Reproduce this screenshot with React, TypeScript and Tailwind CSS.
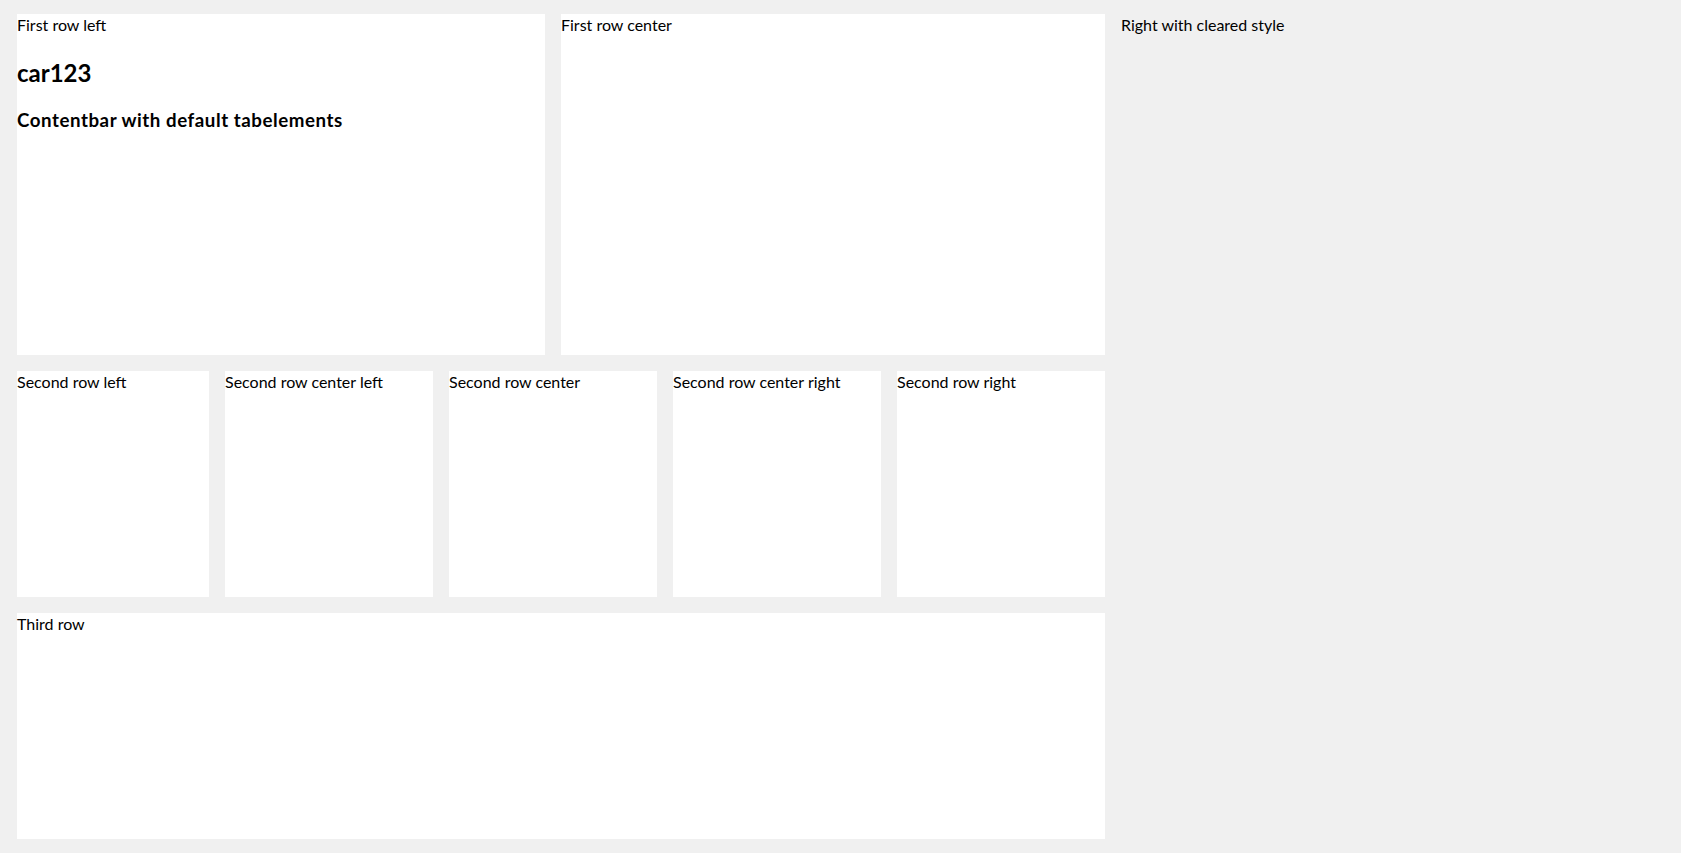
export default function App() {
  const font = "font-['Lato','Liberation_Sans',sans-serif]";
  return (
    <div className={`h-screen w-full bg-[#f0f0f0] flex gap-4 pl-[17px] py-[14px] text-black text-[16px] leading-[21px] ${font}`}>
      <div className="w-[1088px] flex flex-col gap-4 shrink-0">
        <div className="h-[341px] flex gap-4">
          <div className="w-[528px] bg-white">
            <div>First row left</div>
            <h2 className="mt-[22px] mb-[19px] text-[24px] leading-[32px] font-bold">car123</h2>
            <h3 className="text-[18.72px] leading-[25px] font-bold tracking-[0.55px]">Contentbar with default tabelements</h3>
          </div>
          <div className="w-[544px] bg-white">First row center</div>
        </div>
        <div className="h-[226px] flex gap-4">
          <div className="w-[192px] bg-white">Second row left</div>
          <div className="w-[208px] bg-white">Second row center left</div>
          <div className="w-[208px] bg-white">Second row center</div>
          <div className="w-[208px] bg-white">Second row center right</div>
          <div className="w-[208px] bg-white">Second row right</div>
        </div>
        <div className="h-[226px] bg-white">Third row</div>
      </div>
      <div>Right with cleared style</div>
    </div>
  );
}
